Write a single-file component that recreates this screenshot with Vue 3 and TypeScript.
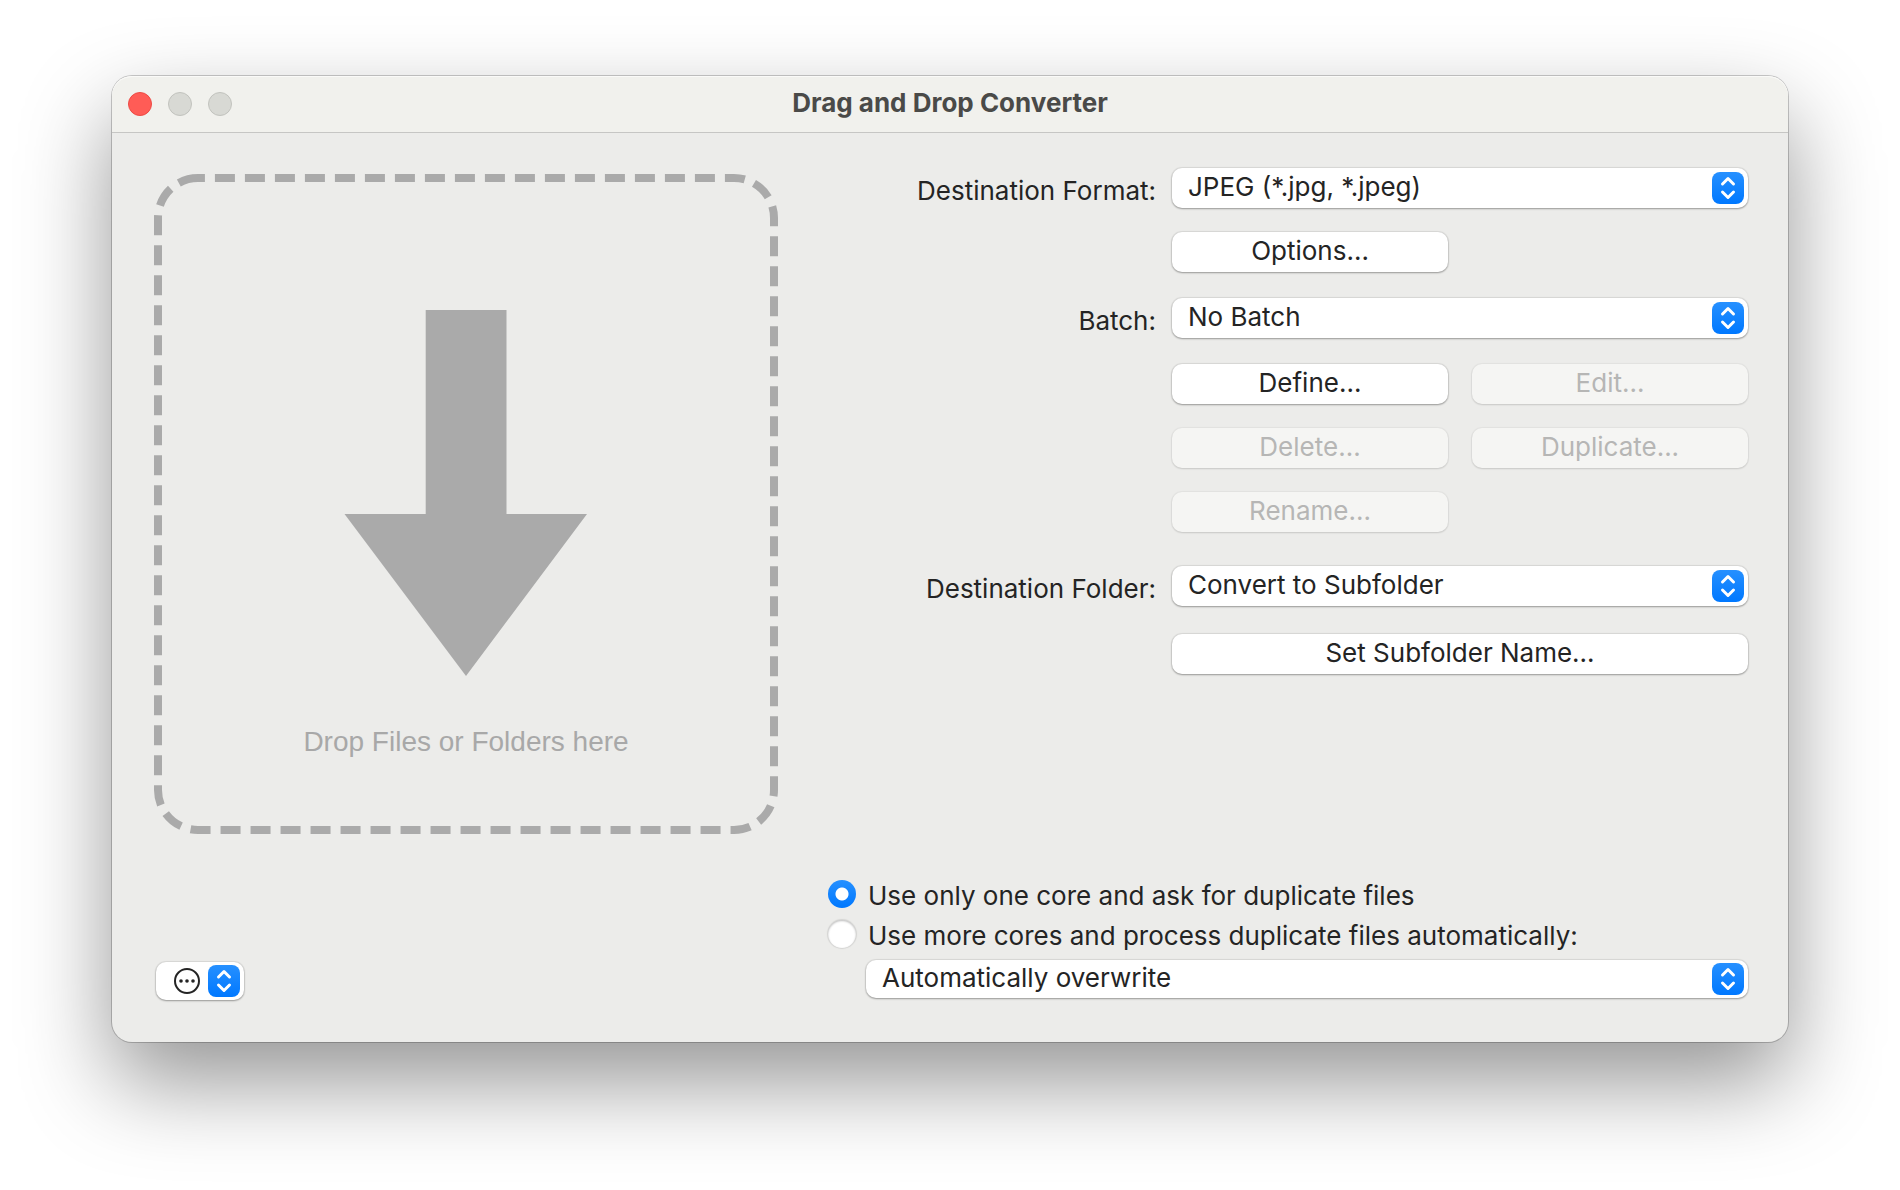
<script setup lang="ts">
import { ref } from 'vue'

const format = ref('JPEG (*.jpg, *.jpeg)')
const batch = ref('No Batch')
const folder = ref('Convert to Subfolder')
const duplicates = ref('Automatically overwrite')
const cores = ref<'one' | 'more'>('one')
</script>

<template>
  <main class="window">
    <header class="titlebar">
      <div class="lights">
        <button class="light close" type="button" aria-label="Close"></button>
        <button class="light" type="button" aria-label="Minimize" disabled></button>
        <button class="light" type="button" aria-label="Zoom" disabled></button>
      </div>
      <h1 class="title">Drag and Drop Converter</h1>
    </header>

    <div class="content">
      <section class="source">
        <div class="dropzone">
          <svg class="dropart" viewBox="0 0 624 660" aria-hidden="true">
            <path
              d="M44 4A40 40 0 0 0 4 44V616A40 40 0 0 0 44 656H580A40 40 0 0 0 620 616V44A40 40 0 0 0 580 4Z"
              fill="none"
              stroke="#aaaaaa"
              stroke-width="8"
              stroke-dasharray="20 10"
            />
            <path d="M271.700 136H352.500V340H433L312 502L190.500 340H271.700Z" fill="#aaaaaa" />
          </svg>
          <p class="hint">Drop Files or Folders here</p>
        </div>

        <button class="control actions" type="button" aria-label="More actions" aria-haspopup="menu">
          <svg class="more" viewBox="0 0 26 26" aria-hidden="true">
            <circle cx="13" cy="13" r="12" fill="none" stroke="#242424" stroke-width="2" />
            <circle cx="7" cy="13" r="1.800" fill="#242424" />
            <circle cx="13" cy="13" r="1.800" fill="#242424" />
            <circle cx="19" cy="13" r="1.800" fill="#242424" />
          </svg>
          <span class="stepper">
            <svg viewBox="0 0 32 32" aria-hidden="true">
              <path d="M10.500 12L16 6.500L21.500 12M10.500 20L16 25.500L21.500 20" />
            </svg>
          </span>
        </button>
      </section>

      <section class="settings">
        <form class="form" @submit.prevent>
          <label class="label" for="format">Destination Format:</label>
          <div class="fields">
            <div class="popup">
              <select id="format" v-model="format" class="control">
                <option>JPEG (*.jpg, *.jpeg)</option>
              </select>
              <span class="stepper">
                <svg viewBox="0 0 32 32" aria-hidden="true">
                  <path d="M10.500 12L16 6.500L21.500 12M10.500 20L16 25.500L21.500 20" />
                </svg>
              </span>
            </div>
            <div class="buttons">
              <button class="control" type="button">Options...</button>
            </div>
          </div>

          <label class="label" for="batch">Batch:</label>
          <div class="fields batch">
            <div class="popup">
              <select id="batch" v-model="batch" class="control">
                <option>No Batch</option>
              </select>
              <span class="stepper">
                <svg viewBox="0 0 32 32" aria-hidden="true">
                  <path d="M10.500 12L16 6.500L21.500 12M10.500 20L16 25.500L21.500 20" />
                </svg>
              </span>
            </div>
            <div class="buttons">
              <button class="control" type="button">Define...</button>
              <button class="control" type="button" disabled>Edit...</button>
              <button class="control" type="button" disabled>Delete...</button>
              <button class="control" type="button" disabled>Duplicate...</button>
              <button class="control" type="button" disabled>Rename...</button>
            </div>
          </div>

          <label class="label" for="folder">Destination Folder:</label>
          <div class="fields folder">
            <div class="popup">
              <select id="folder" v-model="folder" class="control">
                <option>Convert to Subfolder</option>
              </select>
              <span class="stepper">
                <svg viewBox="0 0 32 32" aria-hidden="true">
                  <path d="M10.500 12L16 6.500L21.500 12M10.500 20L16 25.500L21.500 20" />
                </svg>
              </span>
            </div>
            <button class="control" type="button">Set Subfolder Name...</button>
          </div>
        </form>

        <div class="cores" role="radiogroup" aria-label="Cores">
          <label class="choice">
            <input v-model="cores" type="radio" name="cores" value="one" />
            <span>Use only one core and ask for duplicate files</span>
          </label>
          <label class="choice">
            <input v-model="cores" type="radio" name="cores" value="more" />
            <span>Use more cores and process duplicate files automatically:</span>
          </label>
          <div class="popup compact">
            <select v-model="duplicates" class="control" aria-label="Duplicate files">
              <option>Automatically overwrite</option>
            </select>
            <span class="stepper">
              <svg viewBox="0 0 32 32" aria-hidden="true">
                <path d="M10.500 12L16 6.500L21.500 12M10.500 20L16 25.500L21.500 20" />
              </svg>
            </span>
          </div>
        </div>
      </section>
    </div>
  </main>
</template>

<style>
body {
  background: #ffffff;
}

#app {
  display: flow-root;
  min-height: 100vh;
}
</style>

<style scoped>
.window {
  margin: 76px 112px 0;
  border-radius: 20px;
  background: #ececea;
  color: #242424;
  font-family: Inter, "Liberation Sans", sans-serif;
  font-size: 26px;
  line-height: 40px;
  box-shadow:
    0 0 0 1px rgba(0, 0, 0, 0.2),
    0 40px 90px rgba(0, 0, 0, 0.42);
}

.titlebar {
  display: grid;
  grid-template-columns: 1fr auto 1fr;
  align-items: center;
  height: 56px;
  padding: 0 16px;
  border-bottom: 1px solid #c6c6c4;
  border-radius: 20px 20px 0 0;
  background: #f1f1ed;
  box-shadow: inset 0 1px 0 #fafaf8;
}

.lights {
  display: flex;
  gap: 16px;
}

.light {
  width: 24px;
  height: 24px;
  padding: 0;
  border: 1px solid #c2c3be;
  border-radius: 50%;
  background: #d8d9d4;
}

.light.close {
  border-color: #ee4a44;
  background: #ff5c56;
}

.title {
  margin: 0;
  padding-bottom: 2px;
  color: #4a4a48;
  font-size: 26px;
  font-weight: 700;
}

.content {
  display: grid;
  grid-template-columns: 624px minmax(0, 1fr);
  gap: 50px;
  padding: 35px 40px 42px 42px;
}

.source {
  display: flex;
  flex-direction: column;
  align-items: flex-start;
  gap: 128px;
  padding-top: 6px;
}

.dropzone {
  display: grid;
  width: 100%;
}

.dropart,
.hint {
  grid-area: 1 / 1;
}

.dropart {
  display: block;
  width: 100%;
}

.hint {
  align-self: end;
  margin: 0;
  padding-bottom: 72px;
  color: #a8a8a8;
  font-family: "Liberation Sans", Arial, sans-serif;
  font-size: 28px;
  text-align: center;
}

.control {
  box-sizing: border-box;
  width: 100%;
  height: 40px;
  margin: 0;
  padding: 0 0 3px;
  border: 0;
  border-radius: 10px;
  background: #ffffff;
  box-shadow:
    0 0 1px 1px rgba(0, 0, 0, 0.08),
    0 1px 2px rgba(0, 0, 0, 0.3);
  color: #242424;
  font: inherit;
  line-height: 36px;
}

.control:disabled {
  background: #f5f5f3;
  box-shadow:
    0 0 1px 1px rgba(0, 0, 0, 0.04),
    0 1px 2px rgba(0, 0, 0, 0.12);
  color: #b6b6b5;
}

.popup {
  position: relative;
}

.popup .control {
  display: block;
  padding: 0 48px 3px 16px;
  appearance: none;
}

.stepper {
  display: block;
  width: 32px;
  height: 32px;
  border-radius: 8px;
  background: linear-gradient(#2690ff, #0078ff);
}

.stepper svg {
  display: block;
  width: 32px;
  height: 32px;
  fill: none;
  stroke: #ffffff;
  stroke-width: 3;
  stroke-linecap: round;
  stroke-linejoin: round;
}

.popup .stepper {
  position: absolute;
  top: 4px;
  right: 4px;
  pointer-events: none;
}

.control.actions {
  display: flex;
  align-items: center;
  justify-content: flex-end;
  gap: 8px;
  width: 88px;
  height: 38px;
  margin-left: 2px;
  padding: 0 4px 0 0;
}

.more {
  width: 26px;
  height: 26px;
}

.settings {
  display: flex;
  flex-direction: column;
  justify-content: space-between;
  padding-bottom: 2px;
}

.form {
  display: grid;
  grid-template-columns: 328px minmax(0, 1fr);
  column-gap: 16px;
}

.label {
  padding-top: 3px;
  text-align: right;
}

.fields {
  display: flex;
  flex-direction: column;
  gap: 24px;
  padding-bottom: 26px;
}

.fields.batch {
  gap: 26px;
  padding-bottom: 34px;
}

.fields.folder {
  gap: 28px;
  padding-bottom: 0;
}

.buttons {
  display: grid;
  grid-template-columns: 1fr 1fr;
  gap: 24px;
}

.choice {
  display: flex;
  align-items: flex-start;
  gap: 12px;
  height: 40px;
  line-height: 32px;
}

.choice input {
  width: 28px;
  height: 28px;
  margin: 0;
  border-radius: 50%;
  background: #ffffff;
  box-shadow:
    inset 0 1px 2px rgba(0, 0, 0, 0.25),
    0 0 1px 1px rgba(0, 0, 0, 0.1);
  appearance: none;
}

.choice input:checked {
  background:
    radial-gradient(circle, #ffffff 6px, transparent 7px),
    linear-gradient(#2690ff, #0078ff);
  box-shadow: none;
}

.compact {
  margin-left: 38px;
}

.compact .control {
  height: 38px;
}

.compact .stepper {
  top: 3px;
}
</style>
